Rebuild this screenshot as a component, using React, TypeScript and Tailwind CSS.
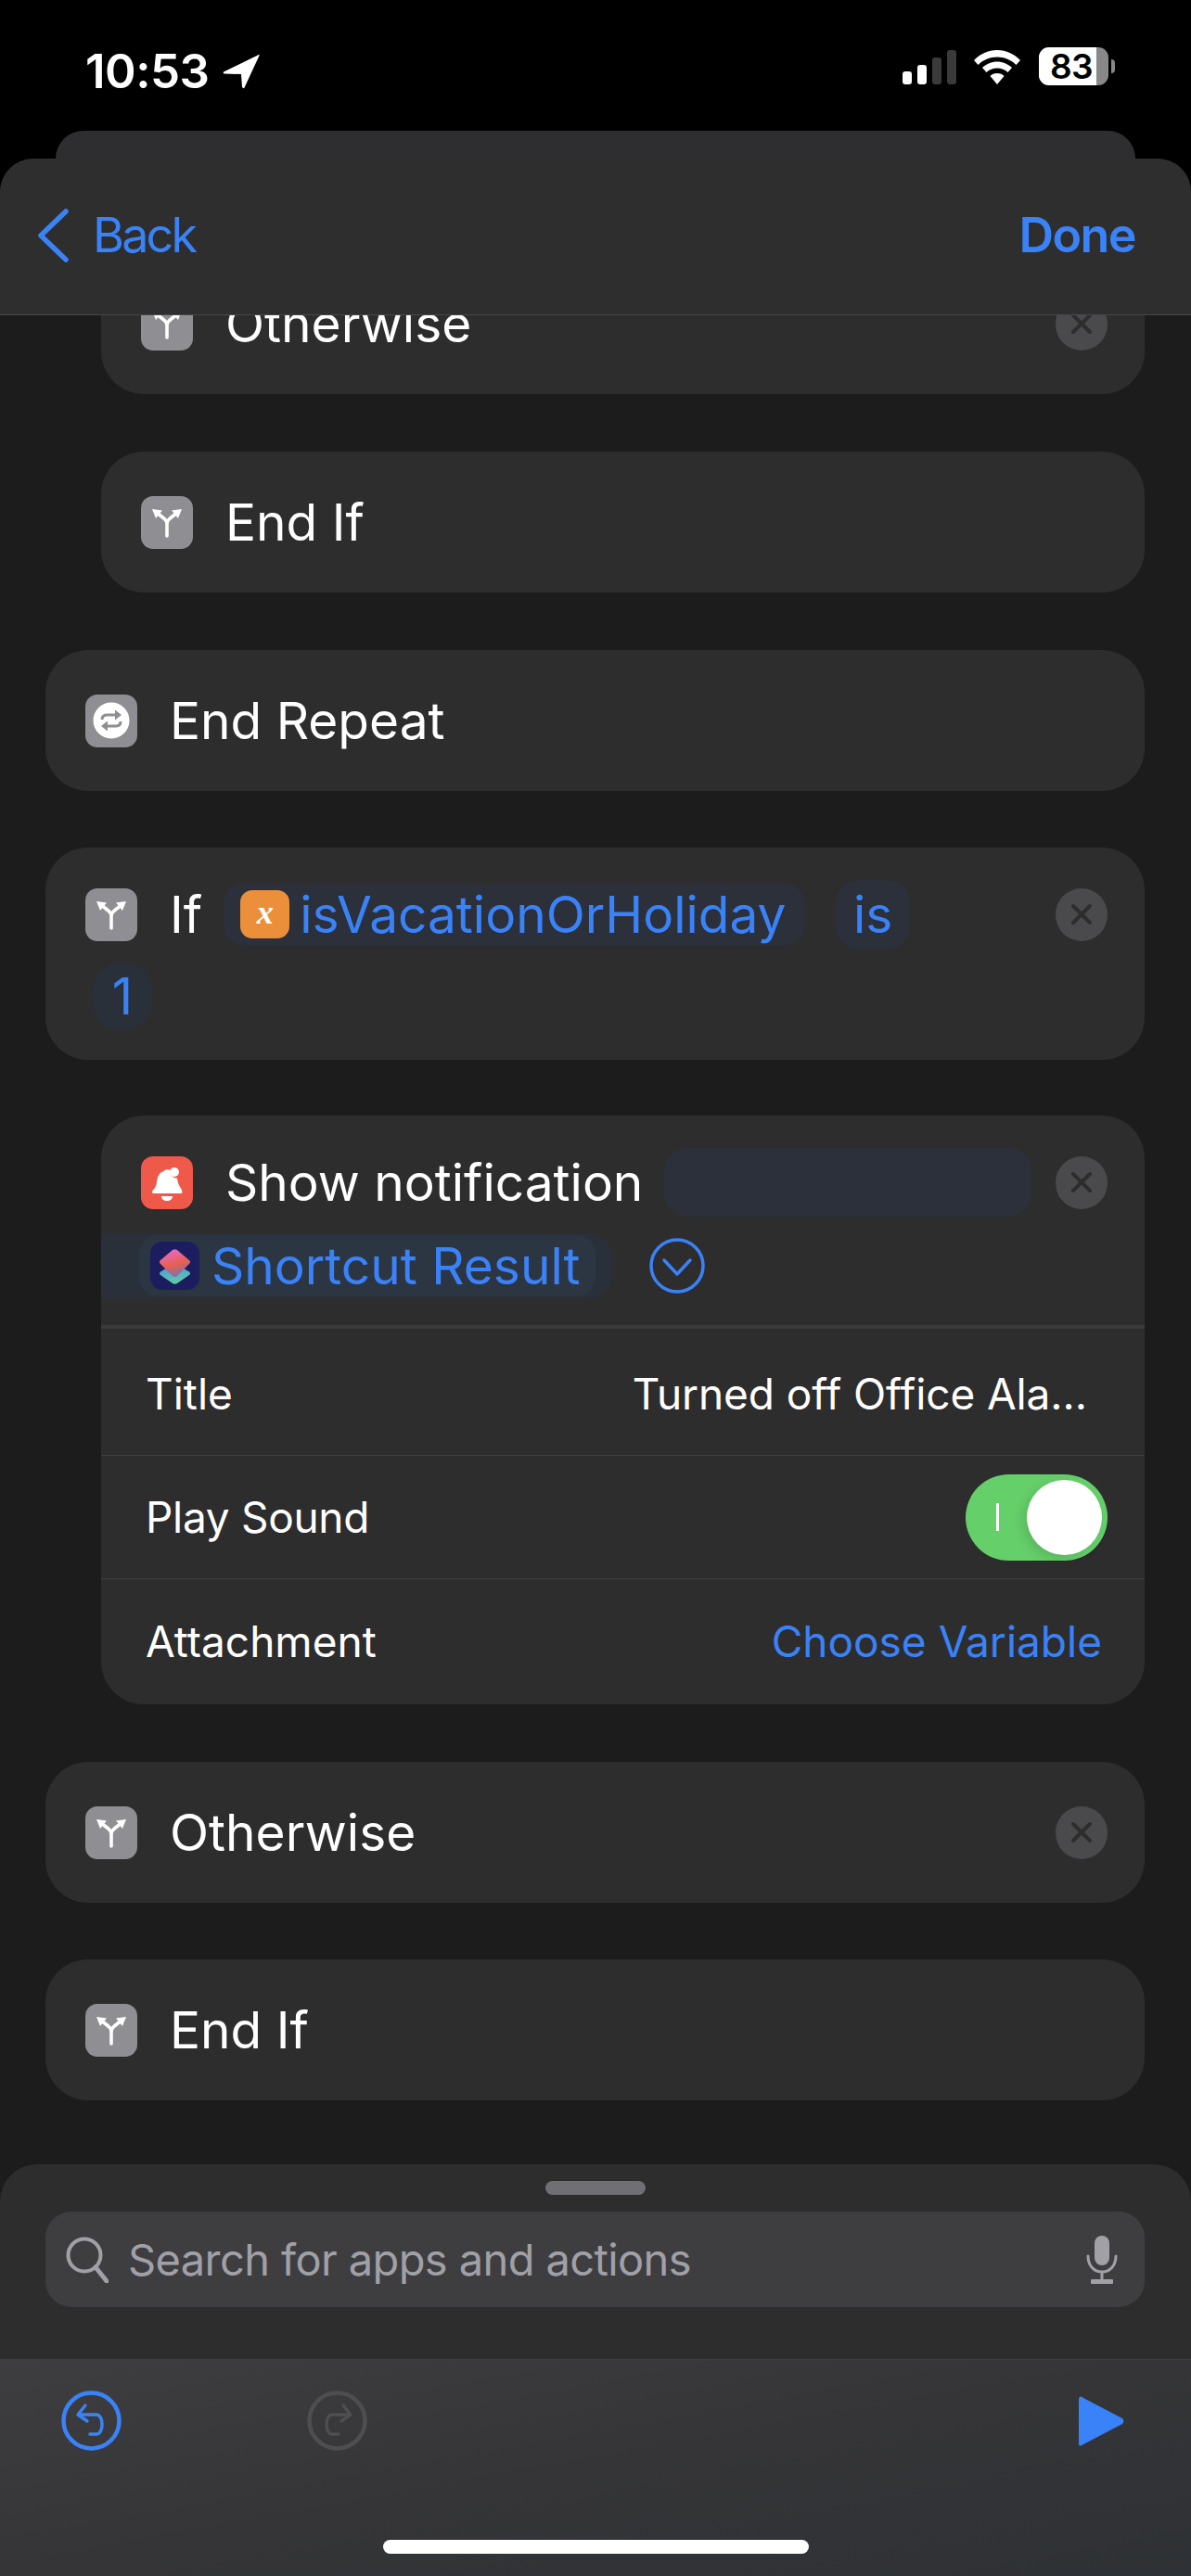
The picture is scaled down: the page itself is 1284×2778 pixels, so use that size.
const font = { fontFamily: "Inter, 'Noto Sans', sans-serif" };

const BranchIcon = () => (
  <div className="w-[56px] h-[57px] shrink-0 rounded-[13px] bg-[#8e8e93]">
    <svg width="56" height="57" viewBox="0 0 56 57" fill="none">
      <path d="M28 43V30C28 26 25 24 17 18M28 30C28 26 31 24 39 18" stroke="#fff" strokeWidth="3.6" strokeLinecap="round" />
      <path d="M12 14L23 15.500L16 24Z M44 14L33 15.500L40 24Z" fill="#fff" />
    </svg>
  </div>
);

const RepeatIcon = () => (
  <div className="w-[56px] h-[57px] shrink-0 rounded-[13px] bg-[#8e8e93] flex items-center justify-center">
    <svg width="40" height="40" viewBox="0 0 40 40" fill="none">
      <circle cx="20" cy="20" r="19.500" fill="#fff" />
      <path d="M10 19c0-3.500 2-5 5-5h12M30 21c0 3.500-2 5-5 5H13" stroke="#8e8e93" strokeWidth="3" />
      <path d="M24 8.500L31 14L24 19.500Z M16 20.500L9 26L16 31.500Z" fill="#8e8e93" />
    </svg>
  </div>
);

const BellIcon = () => (
  <div className="w-[56px] h-[57px] shrink-0 rounded-[13px] bg-[#ee5949]">
    <svg width="56" height="57" viewBox="0 0 56 57">
      <path d="M12 38.500c0-2 3.500-3.500 4.500-8 1-5 1-12 8-14.500 1.500-2 5-2.500 7-1-.5 5 3 8.500 7.500 8.500.5 3 1 5.500 2 7.500 1.500 3 3.500 5 3.500 7.500 0 1-1 1.500-2 1.500H14c-1 0-2-.5-2-1.500Z" fill="#fff" />
      <circle cx="36" cy="17" r="5" fill="#fff" />
      <path d="M22 43h12c0 3-2.500 5-6 5s-6-2-6-5Z" fill="#fff" />
    </svg>
  </div>
);

const VarIcon = () => (
  <div className="w-[53px] h-[52px] shrink-0 rounded-[13px] bg-[#ec8f3b] flex items-center justify-center">
    <span className="text-white text-[36px] italic font-bold leading-none -mt-1" style={{ fontFamily: "'Liberation Serif', serif" }}>x</span>
  </div>
);

const ShortcutIcon = () => (
  <div className="w-[53px] h-[52px] shrink-0 rounded-[13px] bg-[#1b1d5e]">
    <svg width="53" height="52" viewBox="0 0 53 52">
      <defs>
        <linearGradient id="shortTop" x1="0.3" y1="0" x2="0.6" y2="1">
          <stop offset="0" stopColor="#e76ad0" />
          <stop offset="0.55" stopColor="#e8604f" />
          <stop offset="1" stopColor="#7a6fb0" />
        </linearGradient>
        <linearGradient id="shortBottom" x1="0.4" y1="0" x2="0.6" y2="1">
          <stop offset="0" stopColor="#4a8fe8" />
          <stop offset="1" stopColor="#5fd0a0" />
        </linearGradient>
      </defs>
      <path d="M26.500 23L42 32.500Q44 34.500 42 36L29 45Q26.500 46.500 24 45L11 36Q9 34.500 11 32.500Z" fill="url(#shortBottom)" />
      <path d="M24 9Q26.500 7.500 29 9L42 20Q44 22 42 24L29 37Q26.500 39 24 37L11 24Q9 22 11 20Z" fill="url(#shortTop)" />
    </svg>
  </div>
);

const Remove = () => (
  <div className="w-[56px] h-[57px] shrink-0 rounded-full bg-[#4a4a4c] flex items-center justify-center">
    <svg width="26" height="26" viewBox="0 0 26 26">
      <path d="M4 4L22 22M22 4L4 22" stroke="#2d2d2d" strokeWidth="4" strokeLinecap="round" />
    </svg>
  </div>
);

const Card = ({ icon, label, nested, remove, className }: { icon: React.ReactNode; label: string; nested?: boolean; remove?: boolean; className?: string }) => (
  <div className={`h-[152px] mr-[50px] rounded-[46px] bg-[#2d2d2d] flex items-center pr-[40px] ${nested ? "ml-[109px] pl-[43px]" : "ml-[49px] pl-[43px]"} ${className ?? ""}`}>
    {icon}
    <span className="ml-[35px] text-white text-[55px] leading-none">{label}</span>
    {remove && <div className="ml-auto"><Remove /></div>}
  </div>
);

export default function App() {
  return (
    <div className="w-[1284px] h-[2778px] bg-black flex flex-col overflow-hidden font-[440]" style={font}>
      {/* status bar */}
      <div className="h-[141px] shrink-0 relative flex items-start justify-between pl-[92px] pr-[82px] pt-[51px]">
        <div className="flex items-center gap-[14px]">
          <span className="text-white text-[51px] font-semibold leading-none tracking-[-0.5px]">10:53</span>
          <svg width="40" height="38" viewBox="0 0 40 38">
            <path d="M39 1L1 19.500Q0 21 2 21.500L20 22L21 36Q22.500 38 23.500 36.500L39.500 2Q40 0 39 1Z" fill="#fff" />
          </svg>
        </div>
        <div className="flex items-center">
          <svg width="58" height="37" viewBox="0 0 58 37" className="mr-[19px] mt-[2px]">
            <rect x="0" y="23" width="10" height="14" rx="3" fill="#fff" />
            <rect x="16" y="16" width="10" height="21" rx="3" fill="#fff" />
            <rect x="32" y="8" width="10" height="29" rx="3" fill="#3a3a3a" />
            <rect x="48" y="0" width="10" height="37" rx="3" fill="#3a3a3a" />
          </svg>
          <svg width="50" height="37" viewBox="0 0 50 37" className="mr-[20px] mt-[2px]">
            <path d="M25 0C15 0 7 4 0 11L4.500 16C10 10.500 17 7.500 25 7.500C33 7.500 40 10.500 45.500 16L50 11C43 4 35 0 25 0Z" fill="#fff" />
            <path d="M25 12.500C19 12.500 13.500 15 9 19L13.500 24C16.500 21 20.500 19.500 25 19.500C29.500 19.500 33.500 21 36.500 24L41 19C36.500 15 31 12.500 25 12.500Z" fill="#fff" />
            <path d="M25 25C22 25 19 26 17.500 28L25 37L32.500 28C31 26 28 25 25 25Z" fill="#fff" />
          </svg>
          <div className="w-[75px] h-[41px] rounded-[11px] bg-[#888] flex">
            <div className="w-[62px] h-full rounded-l-[11px] bg-white flex items-center justify-center pl-[8px]">
              <span className="text-black text-[37px] font-semibold leading-none tracking-[-0.5px]">83</span>
            </div>
          </div>
          <div className="w-[4px] h-[15px] ml-[3px] rounded-r-full bg-[#888]" />
        </div>
      </div>

      {/* sheet behind */}
      <div className="h-[30px] shrink-0 mx-[60px] rounded-t-[30px] bg-[#2e2e30]" />

      {/* front sheet */}
      <div className="flex-1 min-h-0 rounded-t-[36px] bg-[#1c1c1c] flex flex-col overflow-hidden">
        <div className="h-[169px] shrink-0 bg-[#2e2e2e] border-b border-[#48484a] flex items-center justify-between pl-[40px] pr-[60px] pb-[2px]">
          <div className="flex items-center gap-[26px]">
            <svg width="34" height="58" viewBox="0 0 34 58" fill="none">
              <path d="M31 3L4 29L31 55" stroke="#3a82f7" strokeWidth="5.500" strokeLinecap="round" strokeLinejoin="round" />
            </svg>
            <span className="text-[#3a82f7] text-[52px] leading-none tracking-[-2.8px]">Back</span>
          </div>
          <span className="text-[#3a82f7] text-[52px] font-semibold leading-none tracking-[-1.6px]">Done</span>
        </div>

        <div className="flex-1 min-h-0 overflow-hidden flex flex-col">
          <Card icon={<BranchIcon />} label="Otherwise" nested remove className="shrink-0 -mt-[67px]" />
          <Card icon={<BranchIcon />} label="End If" nested className="shrink-0 mt-[62px]" />
          <Card icon={<RepeatIcon />} label="End Repeat" className="shrink-0 mt-[62px]" />

          {/* if block */}
          <div className="shrink-0 ml-[49px] mr-[50px] mt-[61px] h-[229px] rounded-[46px] bg-[#2d2d2d] pt-[35px] pl-[43px] pr-[40px]">
            <div className="flex items-center h-[74px]">
              <BranchIcon />
              <span className="ml-[35px] text-white text-[55px] leading-none">If</span>
              <div className="ml-[23px] h-[66px] w-[626px] shrink-0 rounded-[20px] bg-[#2b303a] flex items-center pl-[18px]">
                <VarIcon />
                <span className="ml-[11px] text-[#3a82f7] text-[55px] leading-none">isVacationOrHoliday</span>
              </div>
              <div className="ml-[34px] h-[74px] w-[80px] rounded-[24px] bg-[#2b303a] flex items-center justify-center text-[#3a82f7] text-[55px] leading-none">is</div>
              <div className="ml-auto"><Remove /></div>
            </div>
            <div className="mt-[15px] ml-[8px] h-[73px] w-[64px] rounded-[30px] bg-[#29303a] flex items-center justify-center text-[#3a82f7] text-[55px] leading-none">1</div>
          </div>

          {/* notification block */}
          <div className="shrink-0 ml-[109px] mr-[50px] mt-[60px] h-[635px] rounded-[46px] bg-[#2d2d2d] overflow-hidden flex flex-col">
            <div className="pt-[35px] h-[230px] shrink-0 border-b-4 border-[#3a3a3c]">
              <div className="flex items-center h-[74px] pl-[43px] pr-[40px]">
                <BellIcon />
                <span className="ml-[35px] text-white text-[55px] leading-none whitespace-nowrap">Show notification</span>
                <div className="ml-auto mr-[26px] h-[74px] w-[396px] shrink-0 rounded-[24px] bg-[#2b303a]" />
                <Remove />
              </div>
              <div className="mt-[18px] flex items-center">
                <div className="h-[70px] w-[551px] rounded-r-[26px] bg-[#29303a] flex items-center pl-[41px]">
                  <div className="h-[66px] w-[492px] rounded-[20px] bg-[#2c3542] flex items-center pl-[12px]">
                    <ShortcutIcon />
                    <span className="ml-[13px] text-[#3a82f7] text-[55px] leading-none whitespace-nowrap">Shortcut Result</span>
                  </div>
                </div>
                <svg width="60" height="60" viewBox="0 0 60 60" fill="none" className="ml-[40px]">
                  <circle cx="30" cy="30" r="28" stroke="#3a82f7" strokeWidth="3.500" />
                  <path d="M16 24L30 39L44 24" stroke="#3a82f7" strokeWidth="3.500" strokeLinecap="round" strokeLinejoin="round" />
                </svg>
              </div>
            </div>
            <div className="h-[137px] shrink-0 border-b border-[#3f3f41] flex items-center justify-between pl-[48px] pr-[62px] pt-[4px]">
              <span className="text-white text-[46px] leading-none">Title</span>
              <span className="text-white text-[46px] leading-none tracking-[-0.1px]">Turned off Office Ala…</span>
            </div>
            <div className="h-[133px] shrink-0 border-b border-[#3f3f41] flex items-center justify-between pl-[48px] pr-[40px]">
              <span className="text-white text-[46px] leading-none tracking-[-0.3px]">Play Sound</span>
              <div className="w-[153px] h-[93px] rounded-full bg-[#65cf6a] flex items-center pl-[33px] pr-[6px]">
                <div className="w-[3px] h-[30px] bg-white" />
                <div className="ml-auto w-[81px] h-[81px] rounded-full bg-white shadow-[-4px_4px_12px_rgba(0,0,0,0.12)]" />
              </div>
            </div>
            <div className="flex-1 flex items-center justify-between pl-[48px] pr-[46px] pb-[2px]">
              <span className="text-white text-[46px] leading-none">Attachment</span>
              <span className="text-[#3a82f7] text-[46px] leading-none">Choose Variable</span>
            </div>
          </div>

          <Card icon={<BranchIcon />} label="Otherwise" remove className="shrink-0 mt-[62px]" />
          <Card icon={<BranchIcon />} label="End If" className="shrink-0 mt-[61px]" />
        </div>

        {/* action search sheet */}
        <div className="h-[210px] shrink-0 rounded-t-[40px] bg-[#2d2d2d] flex flex-col items-center pt-[18px]">
          <div className="w-[108px] h-[15px] rounded-full bg-[#6f6f74]" />
          <div className="mt-[18px] w-[1185px] h-[103px] ml-[-1px] rounded-[28px] bg-[#3e3e41] flex items-center pl-[22px] pr-[29px]">
            <svg width="46" height="50" viewBox="0 0 46 50" fill="none">
              <circle cx="20" cy="20" r="17.500" stroke="#a0a0a6" strokeWidth="4" />
              <path d="M32 33L44 48" stroke="#a0a0a6" strokeWidth="5" strokeLinecap="round" />
            </svg>
            <span className="ml-[21px] text-[#a0a0a6] text-[47px] leading-none tracking-[-0.6px]">Search for apps and actions</span>
            <svg width="34" height="52" viewBox="0 0 34 52" fill="none" className="ml-auto">
              <rect x="9" y="0" width="16" height="32" rx="8" fill="#a0a0a6" />
              <path d="M2 22c0 10 6 17 15 17s15-7 15-17" stroke="#a0a0a6" strokeWidth="3" strokeLinecap="round" />
              <path d="M17 39V48" stroke="#a0a0a6" strokeWidth="3" />
              <rect x="5" y="47" width="24" height="5" rx="1" fill="#a0a0a6" />
            </svg>
          </div>
        </div>

        {/* toolbar */}
        <div className="h-[234px] shrink-0 relative border-t border-[#404042] bg-gradient-to-br from-[#3e3e40] via-[#353537] to-[#2e3135] flex items-start pl-[66px] pr-[72px] pt-[33px]">
          <svg width="65" height="65" viewBox="0 0 65 65" fill="none">
            <circle cx="32.500" cy="32.500" r="30" stroke="#3a82f7" strokeWidth="4.500" />
            <path d="M26 16L18 26L28 33M19 26H38C46 26 46 47 38 47H31" stroke="#3a82f7" strokeWidth="3.500" strokeLinecap="round" strokeLinejoin="round" />
          </svg>
          <svg width="65" height="65" viewBox="0 0 65 65" fill="none" className="ml-[200px]">
            <circle cx="32.500" cy="32.500" r="30" stroke="#4e4e50" strokeWidth="4.500" />
            <path d="M39 16L47 26L37 33M46 26H27C19 26 19 47 27 47H34" stroke="#4e4e50" strokeWidth="3.500" strokeLinecap="round" strokeLinejoin="round" />
          </svg>
          <svg width="49" height="54" viewBox="0 0 49 54" className="ml-auto mt-[6px]">
            <path d="M0 3Q0 0 3 0.500Q4 1 5 2L47 24Q49.500 27 47 30L5 52Q2 54 1 53.500Q0 53 0 51Z" fill="#3a82f7" />
          </svg>
          <div className="absolute left-[413px] top-[194px] w-[459px] h-[15px] rounded-full bg-white" />
        </div>
      </div>
    </div>
  );
}
